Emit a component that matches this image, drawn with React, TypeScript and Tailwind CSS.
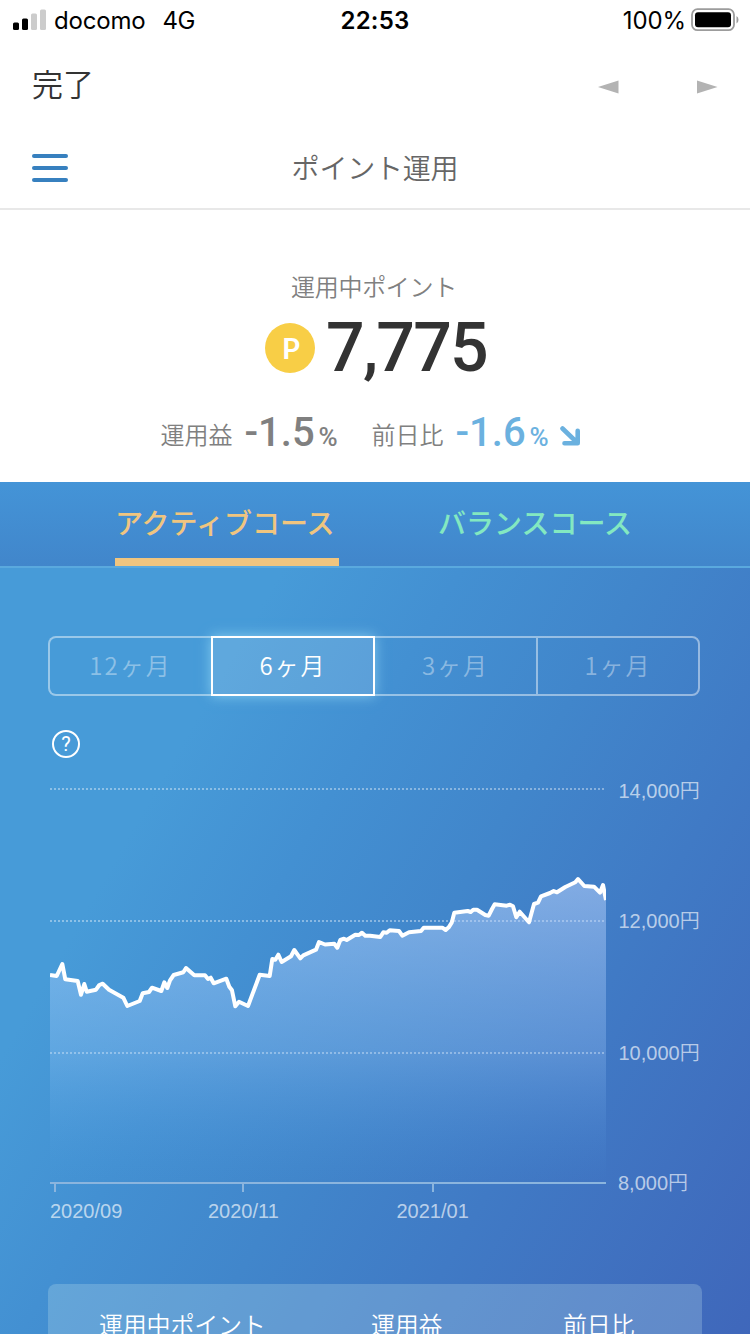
import React from "react";

const LINE =
  "50,975 56.7,976 62.3,964 65.3,979.3 77.7,981 81,994.7 84.3,984 86.7,991.7 96,989.7 99.3,985 102.7,983.7 109,989.7 123.3,997.7 127.3,1006 139.7,1001 142.7,993.3 149,992 152,987.7 161.3,991 164.3,982.3 167.3,988 170,980.3 173.7,975 183.3,972.3 186,968 194.3,975.3 205,975.3 208,979 210.7,977.7 213.7,983.3 226.3,978.7 229.3,986.7 232,990.3 235.3,1006.3 239,1001.7 248,1006 259.7,974.7 269.7,976 272.3,959 275.3,959.7 278.3,954.7 281.7,962 291,956.3 294.3,950 300.3,958.3 303.3,955.3 316,949.7 319,942 325,944.5 334.3,943.7 337.3,947.7 340.3,940 344,938.7 346.7,940 355.3,934.7 359,935 362,932.7 365.3,935.7 370,935.7 380.3,937 383.3,932.3 386.7,932.7 389.7,930.3 399,931 402.3,935.7 409,932.3 421,931 423.7,927.7 442.3,927.7 445.7,930 448.7,927.3 451.7,922.7 454.3,912.7 467.7,911 470.7,912 473.3,909.7 477,909.7 485.3,915 488.7,915.7 492,909 494.7,904.3 506.7,905.7 510,904.7 513,906.3 516.3,917.3 519.7,911.7 529,922.3 534,904 538,902.7 541,896.3 550,893 553.7,891 557,892.3 565.3,887 575.3,882.3 578,879 584.3,886 594,886.7 600,892.7 603,885 606,900";

const GRID = [
  { y: 789, textY: 798, label: "14,000円" },
  { y: 921, textY: 928, label: "12,000円" },
  { y: 1053, textY: 1060, label: "10,000円" },
];

const TICKS = [
  { x: 55, textX: 50, label: "2020/09" },
  { x: 243, textX: 208, label: "2020/11" },
  { x: 433, textX: 396.5, label: "2021/01" },
];

function StatusBar() {
  return (
    <div className="flex h-10 items-center font-['Inter','Noto_Sans_CJK_JP',sans-serif] text-[24px] leading-10 text-black">
      <div className="flex w-[250px] items-center pl-[13px]">
        <svg width="33" height="22" viewBox="0 0 33 22" className="mb-px">
          <rect x="0" y="13.5" width="6" height="7.5" rx="1.5" fill="#000" />
          <rect x="9" y="9.5" width="6" height="11.5" rx="1.5" fill="#000" />
          <rect x="18" y="4.5" width="6" height="16.5" rx="1.5" fill="#ccc" />
          <rect x="27" y="0.5" width="6" height="20.5" rx="1.5" fill="#ccc" />
        </svg>
        <span className="mt-0.5 ml-2 tracking-[-0.2px]">docomo</span>
        <span className="mt-0.5 ml-[17px] tracking-[-0.3px]">4G</span>
      </div>
      <div className="mt-0.5 flex-1 text-center font-semibold tracking-[0.2px]">22:53</div>
      <div className="flex w-[250px] items-center justify-end pr-2.5">
        <span className="mt-0.5 tracking-[-0.1px]">100%</span>
        <svg width="49" height="24" viewBox="0 0 49 24" className="ml-[5px]">
          <rect x="1" y="1.2" width="42" height="21" rx="5.5" fill="none" stroke="#9c9c9c" strokeWidth="1.8" />
          <rect x="4" y="4.2" width="36" height="15" rx="3" fill="#000" />
          <path d="M45.5 8v7.5q2-.9 2-3.7t-2-3.8Z" fill="#9c9c9c" />
        </svg>
      </div>
    </div>
  );
}

function Toolbar() {
  return (
    <div className="flex h-[88px] items-center justify-between pr-8 pl-8">
      <span className="-mt-0.5 text-[31px] leading-[84px] font-[350] text-[#333]">完了</span>
      <div className="mt-1.5 flex gap-[78px]">
        <svg width="21" height="14" viewBox="0 0 21 14"><path d="M0 7 20.5 0.5v13Z" fill="#b3b3b3" /></svg>
        <svg width="21" height="14" viewBox="0 0 21 14"><path d="M20.5 7 0 .5v13Z" fill="#b3b3b3" /></svg>
      </div>
    </div>
  );
}

function Header() {
  return (
    <header className="flex h-[82px] items-center border-b-2 border-[#e8e8e8] px-8">
      <div className="flex w-9 flex-col gap-2">
        <i className="h-1 rounded-full bg-[#3780bf]" />
        <i className="h-1 rounded-full bg-[#3780bf]" />
        <i className="h-1 rounded-full bg-[#3780bf]" />
      </div>
      <h1 className="-mt-0.5 flex-1 pr-9 text-center text-[28px] leading-[78px] font-[350] tracking-[-0.2px] text-[#666]">ポイント運用</h1>
    </header>
  );
}

function Summary() {
  return (
    <section className="flex h-[272px] flex-col items-center pt-[56px]">
      <div className="h-10 pr-0.5 text-[24px] leading-10 font-[350] tracking-[-0.3px] text-[#808080]">運用中ポイント</div>
      <div className="mt-1 flex h-[76px] items-center pl-0.5">
        <div className="mr-[11px] flex size-[50px] items-center justify-center rounded-full bg-[#f8ce46]">
          <span className="pl-0.5 font-['Lato',sans-serif] text-[29px] leading-[50px] font-bold text-white">P</span>
        </div>
        <div className="font-['Roboto',sans-serif] text-[68px] leading-[76px] font-medium tracking-[-1.8px] text-[#333]">7,775</div>
      </div>
      <div className="mt-[21px] -ml-[9px] flex h-[52px] w-[420px] items-baseline font-[350] whitespace-nowrap text-[#808080]">
        <span className="w-[72px] -translate-y-0.5 text-[24px]">運用益</span>
        <span className="ml-3 w-[71px] font-['Roboto',sans-serif] text-[40px] leading-[52px] font-medium">-1.5</span>
        <span className="ml-[3px] w-[21px] font-['Roboto',sans-serif] text-[26px] font-medium">%</span>
        <span className="ml-8 w-[72px] -translate-y-0.5 text-[24px]">前日比</span>
        <span className="ml-3 w-[71px] font-['Roboto',sans-serif] text-[40px] leading-[52px] font-medium text-[#6bb1df]">-1.6</span>
        <span className="ml-[3px] w-[21px] font-['Roboto',sans-serif] text-[26px] font-medium text-[#6bb1df]">%</span>
        <svg width="21" height="20" viewBox="0 0 21 20" className="ml-[9px] shrink-0">
          <path d="M2.5 2.5 16 15.5M17.7 4.8v12.5H4.5" fill="none" stroke="#6bb1df" strokeWidth="4.6" strokeLinecap="round" strokeLinejoin="round" />
        </svg>
      </div>
    </section>
  );
}

function CourseTabs() {
  return (
    <nav className="flex h-[86px] gap-[98px] border-b-2 border-[#5aa9de] bg-linear-to-b from-[#4494d7] to-[#4186cb] pl-[115px] text-[28px] leading-[80px] font-medium whitespace-nowrap">
      <div className="h-[84px] w-[224px] border-b-8 border-[#f0c57f] text-[#f0c57f]">アクティブコース</div>
      <div className="h-[84px] w-[196px] pl-px text-[#83e8c1]">バランスコース</div>
    </nav>
  );
}

function PeriodSwitch() {
  return (
    <div className="mx-12 flex h-[60px] w-[652px] shrink-0 text-[24px] leading-[54px] font-[350] tracking-[2px] text-white/40">
      <div className="w-[163px] rounded-l-lg border-2 border-r-0 border-white/45 text-center">12ヶ月</div>
      <div className="z-10 w-[164px] border-2 border-white bg-white/13 text-center text-white shadow-[0_0_12px_0px_rgba(170,235,255,0.6)]">6ヶ月</div>
      <div className="w-[161px] border-y-2 border-white/45 text-center">3ヶ月</div>
      <div className="w-[164px] rounded-r-lg border-2 border-white/45 text-center">1ヶ月</div>
    </div>
  );
}

function Chart() {
  return (
    <svg width="700" height="460" viewBox="0 776 700 460" className="block font-['Liberation_Sans','Noto_Sans_CJK_JP',sans-serif] text-[20px] font-[350]">
      <defs>
        <linearGradient id="area" x1="0" y1="879" x2="0" y2="1183" gradientUnits="userSpaceOnUse">
          <stop offset="0" stopColor="#c4d8ff" stopOpacity="0.5" />
          <stop offset="0.57" stopColor="#a8d0ff" stopOpacity="0.26" />
          <stop offset="1" stopColor="#50a0e8" stopOpacity="0" />
        </linearGradient>
        <clipPath id="plot"><rect x="50" y="776" width="556" height="410" /></clipPath>
      </defs>
      {GRID.map((g) => (
        <g key={g.y}>
          <path d={`M50 ${g.y}H605`} stroke="#fff" strokeOpacity="0.38" strokeWidth="2" strokeDasharray="2 2" />
          <text x="618.5" y={g.textY} fill="#fff" fillOpacity="0.65">{g.label}</text>
        </g>
      ))}
      <text x="618" y="1190" fill="#fff" fillOpacity="0.65">8,000円</text>
      <polygon points={`${LINE} 606,1183 50,1183`} fill="url(#area)" />
      <path d="M50 1183H606" stroke="#8bb5de" strokeWidth="2" />
      {TICKS.map((t) => (
        <g key={t.x}>
          <path d={`M${t.x} 1184v8`} stroke="#8bb5de" strokeWidth="2" />
          <text x={t.textX} y="1218" fill="#fff" fillOpacity="0.65">{t.label}</text>
        </g>
      ))}
      <polyline points={LINE} clipPath="url(#plot)" fill="none" stroke="#fff" strokeWidth="4" strokeLinejoin="round" />
    </svg>
  );
}

export default function App() {
  return (
    <div className="flex h-[1334px] w-[750px] flex-col overflow-hidden bg-white font-['Noto_Sans_CJK_JP',sans-serif]">
      <StatusBar />
      <Toolbar />
      <Header />
      <Summary />
      <CourseTabs />
      <main className="flex h-[766px] flex-col bg-[linear-gradient(120deg,#479bd8_0px,#479bd8_245px,#4390d2_400px,#4186cb_560px,#407ac5_735px,#3f66ba_1050px)] pt-[68px]">
        <PeriodSwitch />
        <div className="mt-[34px] ml-[52px] flex size-7 shrink-0 items-center justify-center rounded-full border-2 border-white font-['Roboto',sans-serif] text-[20px] leading-6 text-white">?</div>
        <div className="mt-[18px] shrink-0"><Chart /></div>
        <section className="mt-12 ml-12 flex h-[60px] w-[654px] shrink-0 rounded-t-lg bg-[rgba(200,230,240,0.25)] text-[24px] leading-[79px] font-[350] tracking-[-0.2px] whitespace-nowrap text-white">
          <div className="w-[271px] pl-[51px]">運用中ポイント</div>
          <div className="w-[192px] pl-[52px]">運用益</div>
          <div className="pl-[52px]">前日比</div>
        </section>
      </main>
    </div>
  );
}
